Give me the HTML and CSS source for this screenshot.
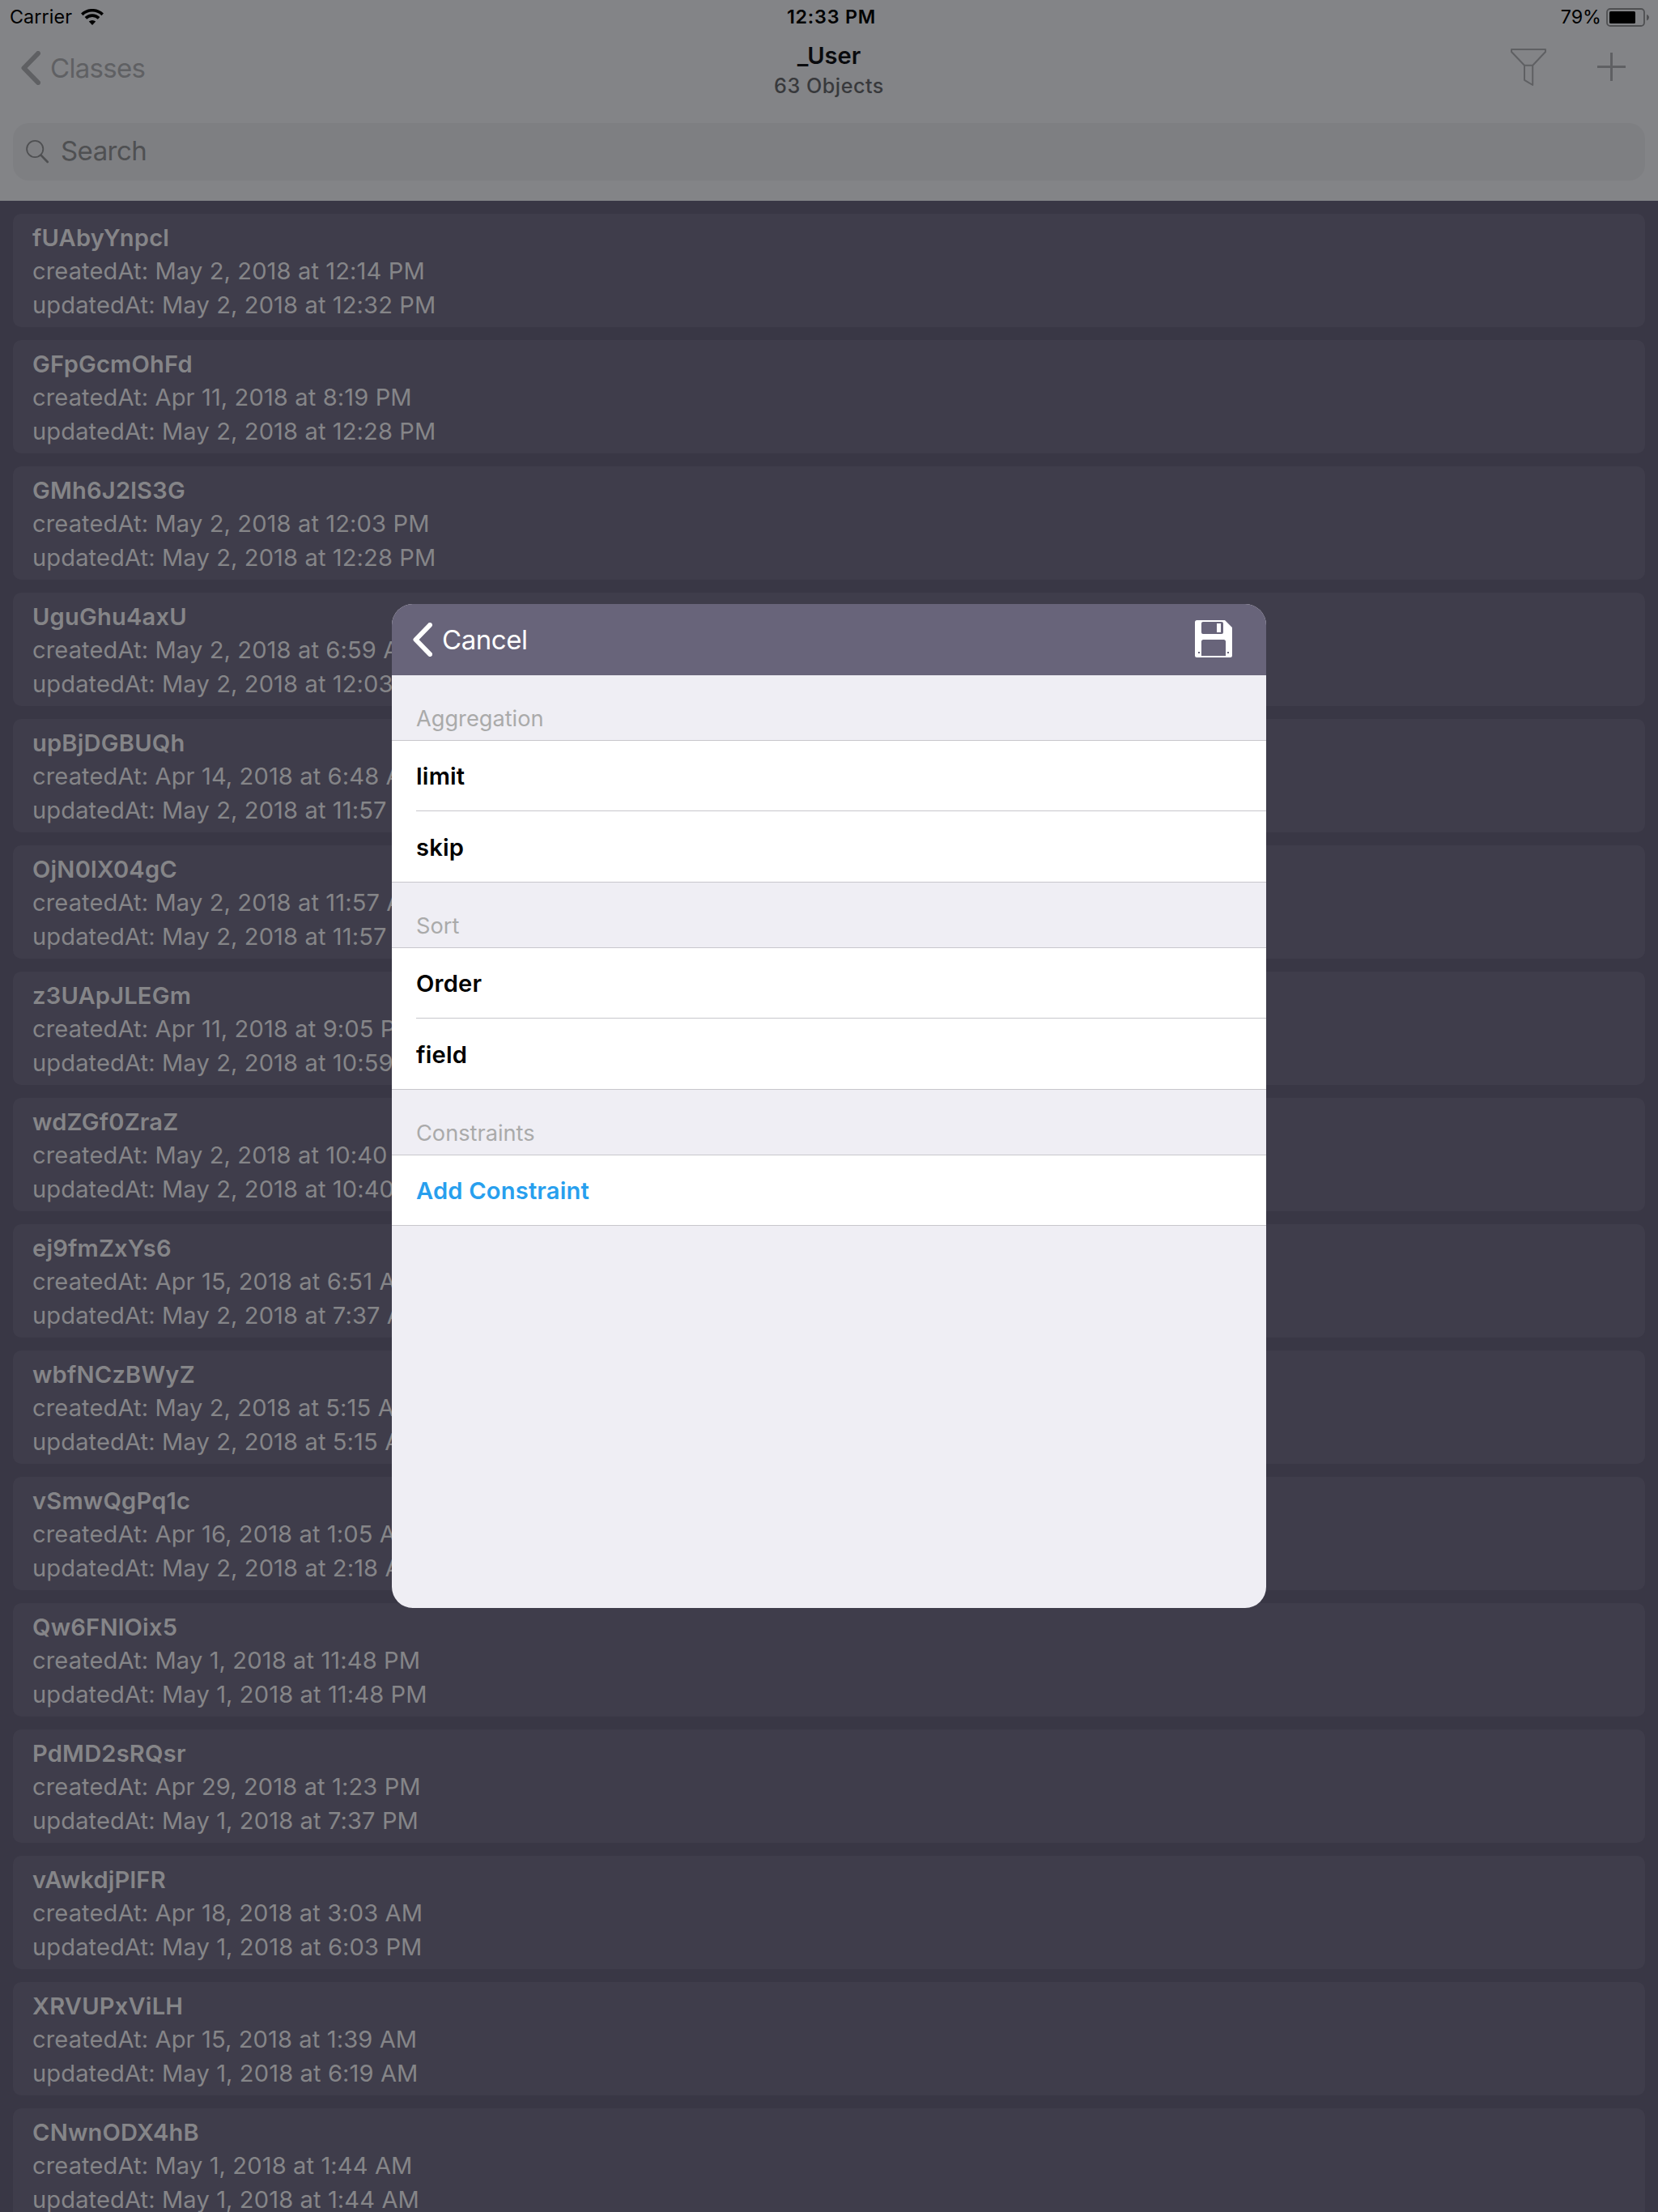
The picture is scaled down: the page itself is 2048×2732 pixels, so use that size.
FILE: index.html
```html
<!DOCTYPE html>
<html lang="en">
<head>
<meta charset="utf-8">
<title>_User</title>
<link rel="stylesheet" href="styles.css">
</head>
<body>
<div class="screen">
  <header class="header">
    <div class="status">
      <div class="status-left">
        <span class="carrier">Carrier</span>
        <svg class="wifi" width="28" height="20" viewBox="0 0 28 20">
          <path d="M14 20 9.8 15.6A6.1 6.1 0 0 1 18.2 15.6Z"/>
          <path d="M5.9 11.4A11.6 11.6 0 0 1 22.1 11.4M1.3 6.9A18.2 18.2 0 0 1 26.7 6.9" fill="none" stroke="#000" stroke-width="3.6"/>
        </svg>
      </div>
      <div class="time">12:33 PM</div>
      <div class="status-right">
        <span>79%</span>
        <svg class="battery" width="54" height="23" viewBox="0 0 54 23">
          <rect x="1" y="1" width="46" height="21" rx="4" fill="none" stroke="#4f5052" stroke-width="1.8"/>
          <rect x="4" y="4" width="32" height="15" rx="1.5"/>
          <path d="M50 8Q53 9 53 11.6T50 15.5Z" fill="#4f5052"/>
        </svg>
      </div>
    </div>
    <nav class="nav">
      <div class="back">
        <svg width="24" height="42" viewBox="0 0 24 42"><path d="M21 3 3.5 21 21 39"/></svg>
        <span>Classes</span>
      </div>
      <div class="heading">
        <div class="title">_User</div>
        <div class="subtitle">63 Objects</div>
      </div>
      <div class="actions">
        <svg class="filter" width="44" height="47" viewBox="0 0 44 47"><path d="M1 1H43V4L27.2 20.7V45L17 38.8V20.7L1 4ZM17 20.7H27.2"/></svg>
        <svg class="plus" width="35" height="35" viewBox="0 0 35 35"><path d="M17.5 0V35M0 17.5H35"/></svg>
      </div>
    </nav>
    <div class="search">
      <svg width="28" height="29" viewBox="0 0 28 29"><circle cx="11.2" cy="11" r="10.1" stroke-width="1.8"/><path d="M18.6 18.6 26.7 27" stroke-width="2.7"/></svg>
      <span>Search</span>
    </div>
  </header>
  <main class="list">
    <article class="card"><h2>fUAbyYnpcl</h2><p>createdAt: May 2, 2018 at 12:14 PM</p><p>updatedAt: May 2, 2018 at 12:32 PM</p></article>
    <article class="card"><h2>GFpGcmOhFd</h2><p>createdAt: Apr 11, 2018 at 8:19 PM</p><p>updatedAt: May 2, 2018 at 12:28 PM</p></article>
    <article class="card"><h2>GMh6J2lS3G</h2><p>createdAt: May 2, 2018 at 12:03 PM</p><p>updatedAt: May 2, 2018 at 12:28 PM</p></article>
    <article class="card"><h2>UguGhu4axU</h2><p>createdAt: May 2, 2018 at 6:59 AM</p><p>updatedAt: May 2, 2018 at 12:03 PM</p></article>
    <article class="card"><h2>upBjDGBUQh</h2><p>createdAt: Apr 14, 2018 at 6:48 AM</p><p>updatedAt: May 2, 2018 at 11:57 AM</p></article>
    <article class="card"><h2>OjN0lX04gC</h2><p>createdAt: May 2, 2018 at 11:57 AM</p><p>updatedAt: May 2, 2018 at 11:57 AM</p></article>
    <article class="card"><h2>z3UApJLEGm</h2><p>createdAt: Apr 11, 2018 at 9:05 PM</p><p>updatedAt: May 2, 2018 at 10:59 AM</p></article>
    <article class="card"><h2>wdZGf0ZraZ</h2><p>createdAt: May 2, 2018 at 10:40 AM</p><p>updatedAt: May 2, 2018 at 10:40 AM</p></article>
    <article class="card"><h2>ej9fmZxYs6</h2><p>createdAt: Apr 15, 2018 at 6:51 AM</p><p>updatedAt: May 2, 2018 at 7:37 AM</p></article>
    <article class="card"><h2>wbfNCzBWyZ</h2><p>createdAt: May 2, 2018 at 5:15 AM</p><p>updatedAt: May 2, 2018 at 5:15 AM</p></article>
    <article class="card"><h2>vSmwQgPq1c</h2><p>createdAt: Apr 16, 2018 at 1:05 AM</p><p>updatedAt: May 2, 2018 at 2:18 AM</p></article>
    <article class="card"><h2>Qw6FNlOix5</h2><p>createdAt: May 1, 2018 at 11:48 PM</p><p>updatedAt: May 1, 2018 at 11:48 PM</p></article>
    <article class="card"><h2>PdMD2sRQsr</h2><p>createdAt: Apr 29, 2018 at 1:23 PM</p><p>updatedAt: May 1, 2018 at 7:37 PM</p></article>
    <article class="card"><h2>vAwkdjPlFR</h2><p>createdAt: Apr 18, 2018 at 3:03 AM</p><p>updatedAt: May 1, 2018 at 6:03 PM</p></article>
    <article class="card"><h2>XRVUPxViLH</h2><p>createdAt: Apr 15, 2018 at 1:39 AM</p><p>updatedAt: May 1, 2018 at 6:19 AM</p></article>
    <article class="card"><h2>CNwnODX4hB</h2><p>createdAt: May 1, 2018 at 1:44 AM</p><p>updatedAt: May 1, 2018 at 1:44 AM</p></article>
  </main>
  <div class="overlay">
    <section class="modal">
      <div class="modal-bar">
        <div class="back cancel">
          <svg width="24" height="42" viewBox="0 0 24 42"><path d="M21 3 3.5 21 21 39"/></svg>
          <span>Cancel</span>
        </div>
        <svg class="save" width="46" height="46" viewBox="0 0 46 46">
          <path fill="#fff" fill-rule="evenodd" d="M2.5 0H37L46 9V43.5Q46 46 43.5 46H2.5Q0 46 0 43.5V2.5Q0 0 2.5 0ZM10 2Q8 2 8 4V15Q8 17 10 17H33Q35 17 35 15V4Q35 2 33 2ZM27 4H32V15H27ZM10.500 24Q8 24 8 26.500V44H38V26.500Q38 24 35.500 24ZM4 39V41H6V39ZM40 39V41H42V39Z"/>
        </svg>
      </div>
      <h3 class="section">Aggregation</h3>
      <div class="group">
        <div class="cell">limit</div>
        <div class="cell">skip</div>
      </div>
      <h3 class="section">Sort</h3>
      <div class="group">
        <div class="cell">Order</div>
        <div class="cell">field</div>
      </div>
      <h3 class="section">Constraints</h3>
      <div class="group">
        <div class="cell link">Add Constraint</div>
      </div>
    </section>
  </div>
</div>
</body>
</html>
```
FILE: styles.css
```css
* { box-sizing: border-box; margin: 0; padding: 0; }

body {
  font-family: Inter, "Liberation Sans", sans-serif;
  background: #393745;
}

svg { display: block; flex: none; }

.screen {
  position: relative;
  width: 2048px;
  height: 2732px;
  overflow: hidden;
}

.header {
  height: 248px;
  background: #838487;
}

/* Status bar */
.status {
  display: grid;
  grid-template-columns: 1fr auto 1fr;
  height: 40px;
  font-size: 23.3px;
  line-height: 41px;
  color: #000;
}
.status-left, .status-right { display: flex; align-items: center; }
.status-left { padding-left: 12px; gap: 11px; letter-spacing: 0.1px; }
.status-right { justify-content: flex-end; padding-right: 10px; gap: 6px; }
.time { padding-left: 6px; font-weight: 600; letter-spacing: 0.8px; }
.battery { margin-top: 1px; }

/* Navigation bar */
.nav {
  display: grid;
  grid-template-columns: 1fr auto 1fr;
  height: 88px;
}
.back {
  display: flex;
  align-items: center;
  gap: 12px;
  padding-left: 26px;
  font-size: 33px;
  line-height: 40px;
  letter-spacing: -0.7px;
  color: #5f6063;
}
.back path {
  fill: none;
  stroke: currentColor;
  stroke-width: 6;
  stroke-linecap: round;
  stroke-linejoin: round;
}
.heading { padding-top: 10px; text-align: center; }
.title {
  font-size: 29.1px;
  line-height: 37px;
  font-weight: 600;
  color: #0a0b0e;
}
.subtitle {
  font-size: 25.2px;
  line-height: 38px;
  font-weight: 500;
  letter-spacing: 0.5px;
  color: #38393c;
}
.actions {
  display: flex;
  align-items: flex-start;
  justify-content: flex-end;
  gap: 63px;
  padding: 20px 40px 0 0;
}
.actions path { fill: none; stroke: #5f6063; }
.filter { stroke-width: 2; stroke-linejoin: round; }
.plus { margin-top: 5px; stroke-width: 3; }

/* Search field */
.search {
  display: flex;
  align-items: center;
  gap: 15px;
  height: 71px;
  margin: 24px 16px 0;
  padding: 0 16px 3px;
  border-radius: 20px;
  background: #7e7f82;
  font-size: 33px;
  line-height: 40px;
  letter-spacing: -0.55px;
  color: #4f5052;
}
.search svg { margin-top: 2px; fill: none; stroke: #4f5052; stroke-linecap: round; }

/* Object list */
.list {
  display: flex;
  flex-direction: column;
  gap: 16px;
  padding: 16px;
}
.card {
  flex: none;
  height: 140px;
  padding: 9px 24px 0;
  border-radius: 10px;
  background: #3f3d4b;
  font-size: 29.1px;
  line-height: 42px;
  letter-spacing: 0.11px;
  color: #858588;
}
.card h2 {
  font-size: inherit;
  line-height: 41px;
  font-weight: 600;
  letter-spacing: 0.2px;
}

/* Query dialog */
.overlay {
  position: absolute;
  inset: 0;
  display: flex;
  align-items: center;
  justify-content: center;
}
.modal {
  width: 1080px;
  height: 1240px;
  overflow: hidden;
  border-radius: 26px;
  background: #efeef4;
}
.modal-bar {
  display: flex;
  align-items: center;
  justify-content: space-between;
  height: 88px;
  padding-right: 42px;
  background: #68647a;
}
.cancel { color: #fff; letter-spacing: -0.45px; }
.save { margin-top: -2px; }
.section {
  height: 80px;
  padding: 37px 30px 0;
  font-size: 27.2px;
  line-height: 33px;
  font-weight: 400;
  color: #aaa;
}
.group {
  border-top: 1px solid #c8c7cc;
  border-bottom: 1px solid #c8c7cc;
  background: #fff;
}
.cell {
  height: 86px;
  padding-top: 1px;
  padding-left: 30px;
  font-size: 29.1px;
  line-height: 85px;
  font-weight: 600;
  letter-spacing: 0.2px;
  color: #000;
}
.cell + .cell {
  height: 88px;
  margin-left: 30px;
  padding-left: 0;
  border-top: 1px solid #c8c7cc;
  line-height: 87px;
}
.cell.link { color: #289fee; }
```
